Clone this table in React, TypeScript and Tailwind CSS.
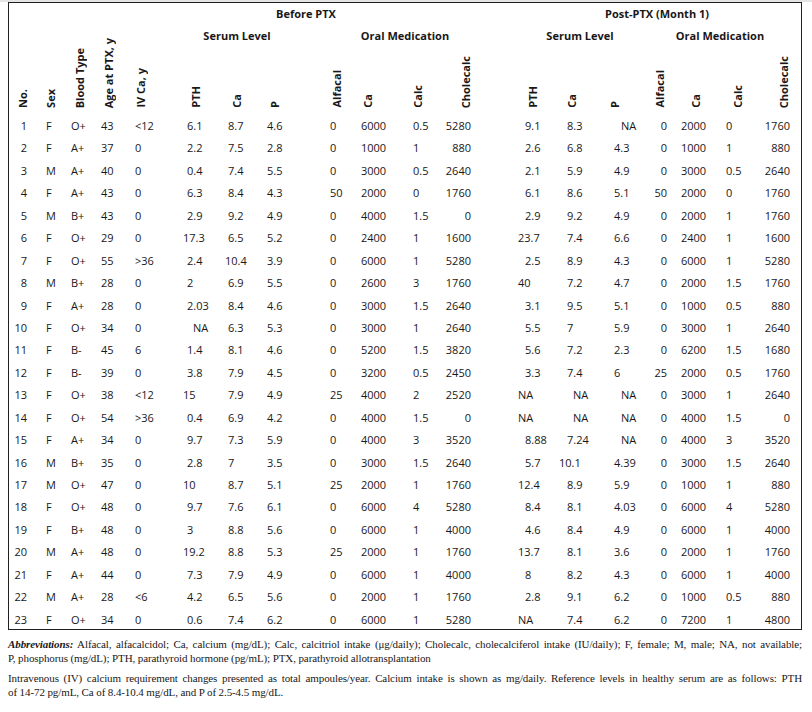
import React from "react";

type Col = { w: string; h: string; label: string; d: string; wide?: string; na?: string };

const cols: Col[] = [
  { w: "w-[31px]", h: "pl-[8px]", label: "No.", d: "text-right pr-[13px]" },
  { w: "w-[26px]", h: "pl-[5px]", label: "Sex", d: "pl-[6px]" },
  { w: "w-[30px]", h: "pl-[8px]", label: "Blood Type", d: "pl-[5px]" },
  { w: "w-[32px]", h: "pl-[7px]", label: "Age at PTX, y", d: "pl-[5px]" },
  { w: "w-[42px]", h: "pl-[7px]", label: "IV Ca, y", d: "pl-[7px]" },
  { w: "w-[45px]", h: "pl-[20px]", label: "PTH", d: "pl-[17px]", wide: "pl-[13px]", na: "pl-[23px]" },
  { w: "w-[43px]", h: "pl-[16px]", label: "Ca", d: "pl-[13px]", wide: "pl-[10px]" },
  { w: "w-[52px]", h: "pl-[11px]", label: "P", d: "pl-[9px]" },
  { w: "w-[40px]", h: "pl-[21px]", label: "Alfacal", d: "pl-[20px]" },
  { w: "w-[55px]", h: "pl-[12px]", label: "Ca", d: "pl-[11px]" },
  { w: "w-[35px]", h: "pl-[7px]", label: "Calc", d: "pl-[8px]" },
  { w: "w-[50px]", h: "pl-[20px]", label: "Cholecalc", d: "text-right pr-[19px]" },
  { w: "w-[60px]", h: "pl-[37px]", label: "PTH", d: "pl-[35px]", wide: "pl-[28px]", na: "pl-[28px]" },
  { w: "w-[50px]", h: "pl-[16px]", label: "Ca", d: "pl-[17px]", wide: "pl-[9px]", na: "pl-[23px]" },
  { w: "w-[45px]", h: "pl-[9px]", label: "P", d: "pl-[14px]", na: "pl-[21px]" },
  { w: "w-[27px]", h: "pl-[9px]", label: "Alfacal", d: "text-right pr-[5px]" },
  { w: "w-[43px]", h: "pl-[18px]", label: "Ca", d: "pl-[9px]" },
  { w: "w-[40px]", h: "pl-[17px]", label: "Calc", d: "pl-[11px]" },
  { w: "w-[46px]", h: "pl-[23px]", label: "Cholecalc", d: "text-right pr-[11px]" },
];

const raw = `1 F O+ 43 <12 6.1 8.7 4.6 0 6000 0.5 5280 9.1 8.3 NA 0 2000 0 1760
2 F A+ 37 0 2.2 7.5 2.8 0 1000 1 880 2.6 6.8 4.3 0 1000 1 880
3 M A+ 40 0 0.4 7.4 5.5 0 3000 0.5 2640 2.1 5.9 4.9 0 3000 0.5 2640
4 F A+ 43 0 6.3 8.4 4.3 50 2000 0 1760 6.1 8.6 5.1 50 2000 0 1760
5 M B+ 43 0 2.9 9.2 4.9 0 4000 1.5 0 2.9 9.2 4.9 0 2000 1 1760
6 F O+ 29 0 17.3 6.5 5.2 0 2400 1 1600 23.7 7.4 6.6 0 2400 1 1600
7 F O+ 55 >36 2.4 10.4 3.9 0 6000 1 5280 2.5 8.9 4.3 0 6000 1 5280
8 M B+ 28 0 2 6.9 5.5 0 2600 3 1760 40 7.2 4.7 0 2000 1.5 1760
9 F A+ 28 0 2.03 8.4 4.6 0 3000 1.5 2640 3.1 9.5 5.1 0 1000 0.5 880
10 F O+ 34 0 NA 6.3 5.3 0 3000 1 2640 5.5 7 5.9 0 3000 1 2640
11 F B- 45 6 1.4 8.1 4.6 0 5200 1.5 3820 5.6 7.2 2.3 0 6200 1.5 1680
12 F B- 39 0 3.8 7.9 4.5 0 3200 0.5 2450 3.3 7.4 6 25 2000 0.5 1760
13 F O+ 38 <12 15 7.9 4.9 25 4000 2 2520 NA NA NA 0 3000 1 2640
14 F O+ 54 >36 0.4 6.9 4.2 0 4000 1.5 0 NA NA NA 0 4000 1.5 0
15 F A+ 34 0 9.7 7.3 5.9 0 4000 3 3520 8.88 7.24 NA 0 4000 3 3520
16 M B+ 35 0 2.8 7 3.5 0 3000 1.5 2640 5.7 10.1 4.39 0 3000 1.5 2640
17 M O+ 47 0 10 8.7 5.1 25 2000 1 1760 12.4 8.9 5.9 0 1000 1 880
18 F O+ 48 0 9.7 7.6 6.1 0 6000 4 5280 8.4 8.1 4.03 0 6000 4 5280
19 F B+ 48 0 3 8.8 5.6 0 6000 1 4000 4.6 8.4 4.9 0 6000 1 4000
20 M A+ 48 0 19.2 8.8 5.3 25 2000 1 1760 13.7 8.1 3.6 0 2000 1 1760
21 F A+ 44 0 7.3 7.9 4.9 0 6000 1 4000 8 8.2 4.3 0 6000 1 4000
22 M A+ 28 <6 4.2 6.5 5.6 0 2000 1 1760 2.8 9.1 6.2 0 1000 0.5 880
23 F O+ 34 0 0.6 7.4 6.2 0 6000 1 5280 NA 7.4 6.2 0 7200 1 4800`;

const rows = raw.split("\n").map((l) => l.trim().split(/\s+/));

function cellClass(c: Col, v: string) {
  if (v === "NA" && c.na) return c.na;
  if (c.wide && v !== "NA" && v.split(".")[0].length >= 2) return c.wide;
  return c.d;
}

function Rot({ children }: { children: React.ReactNode }) {
  return (
    <span className="block [writing-mode:vertical-rl] rotate-180 leading-[12px] font-bold whitespace-nowrap">
      {children}
    </span>
  );
}

export default function App() {
  return (
    <div className="w-[812px] h-[712px] bg-white text-[#1a1718] overflow-hidden">
      <div className="h-[2px] bg-[#e4e4e4]" />
      <div className="ml-[8px] w-[794px] border border-[#231f20] font-['Open_Sans',sans-serif] text-[11px] font-medium">
        <div className="flex h-[22px] items-center font-bold">
          <div className="w-[594px] flex justify-center whitespace-nowrap">Before PTX</div>
          <div className="w-[108px] flex justify-center whitespace-nowrap">Post-PTX (Month 1)</div>
        </div>
        <div className="flex h-[90px]">
          {cols.slice(0, 5).map((c, i) => (
            <div key={i} className={`${c.w} ${c.h} shrink-0 flex items-end pb-[7px]`}>
              <Rot>{c.label}</Rot>
            </div>
          ))}
          <div className="flex flex-col w-[631px]">
            <div className="flex h-[22px] items-center font-bold">
              <div className="w-[134px] flex justify-center whitespace-nowrap">Serum Level</div>
              <div className="w-[202px] flex justify-center whitespace-nowrap">Oral Medication</div>
              <div className="w-[148px] flex justify-center whitespace-nowrap">Serum Level</div>
              <div className="w-[132px] flex justify-center whitespace-nowrap">Oral Medication</div>
            </div>
            <div className="flex flex-1">
              {cols.slice(5).map((c, i) => (
                <div key={i} className={`${c.w} ${c.h} shrink-0 flex items-end pb-[7px]`}>
                  <Rot>{c.label}</Rot>
                </div>
              ))}
            </div>
          </div>
        </div>
        <div className="h-[514px]">
          {rows.map((r, ri) => (
            <div key={ri} className="flex h-[22.45px] leading-[22.45px]">
              {r.map((v, ci) => (
                <div key={ci} className={`${cols[ci].w} ${cellClass(cols[ci], v)} shrink-0 whitespace-nowrap`}>
                  {v}
                </div>
              ))}
            </div>
          ))}
        </div>
      </div>
      <div className="ml-[8px] w-[794px] mt-[8px] font-['Liberation_Serif',serif] text-[11px] tracking-[-0.1px] leading-[13.5px]">
        <div className="text-justify [text-align-last:justify]">
          <span className="font-bold italic">Abbreviations:</span> Alfacal, alfacalcidol; Ca, calcium (mg/dL); Calc, calcitriol intake (μg/daily); Cholecalc, cholecalciferol intake (IU/daily); F, female; M, male; NA, not available;
        </div>
        <div>P, phosphorus (mg/dL); PTH, parathyroid hormone (pg/mL); PTX, parathyroid allotransplantation</div>
        <div className="mt-[7px] text-justify [text-align-last:justify]">
          Intravenous (IV) calcium requirement changes presented as total ampoules/year. Calcium intake is shown as mg/daily. Reference levels in healthy serum are as follows: PTH
        </div>
        <div>of 14-72 pg/mL, Ca of 8.4-10.4 mg/dL, and P of 2.5-4.5 mg/dL.</div>
      </div>
    </div>
  );
}
